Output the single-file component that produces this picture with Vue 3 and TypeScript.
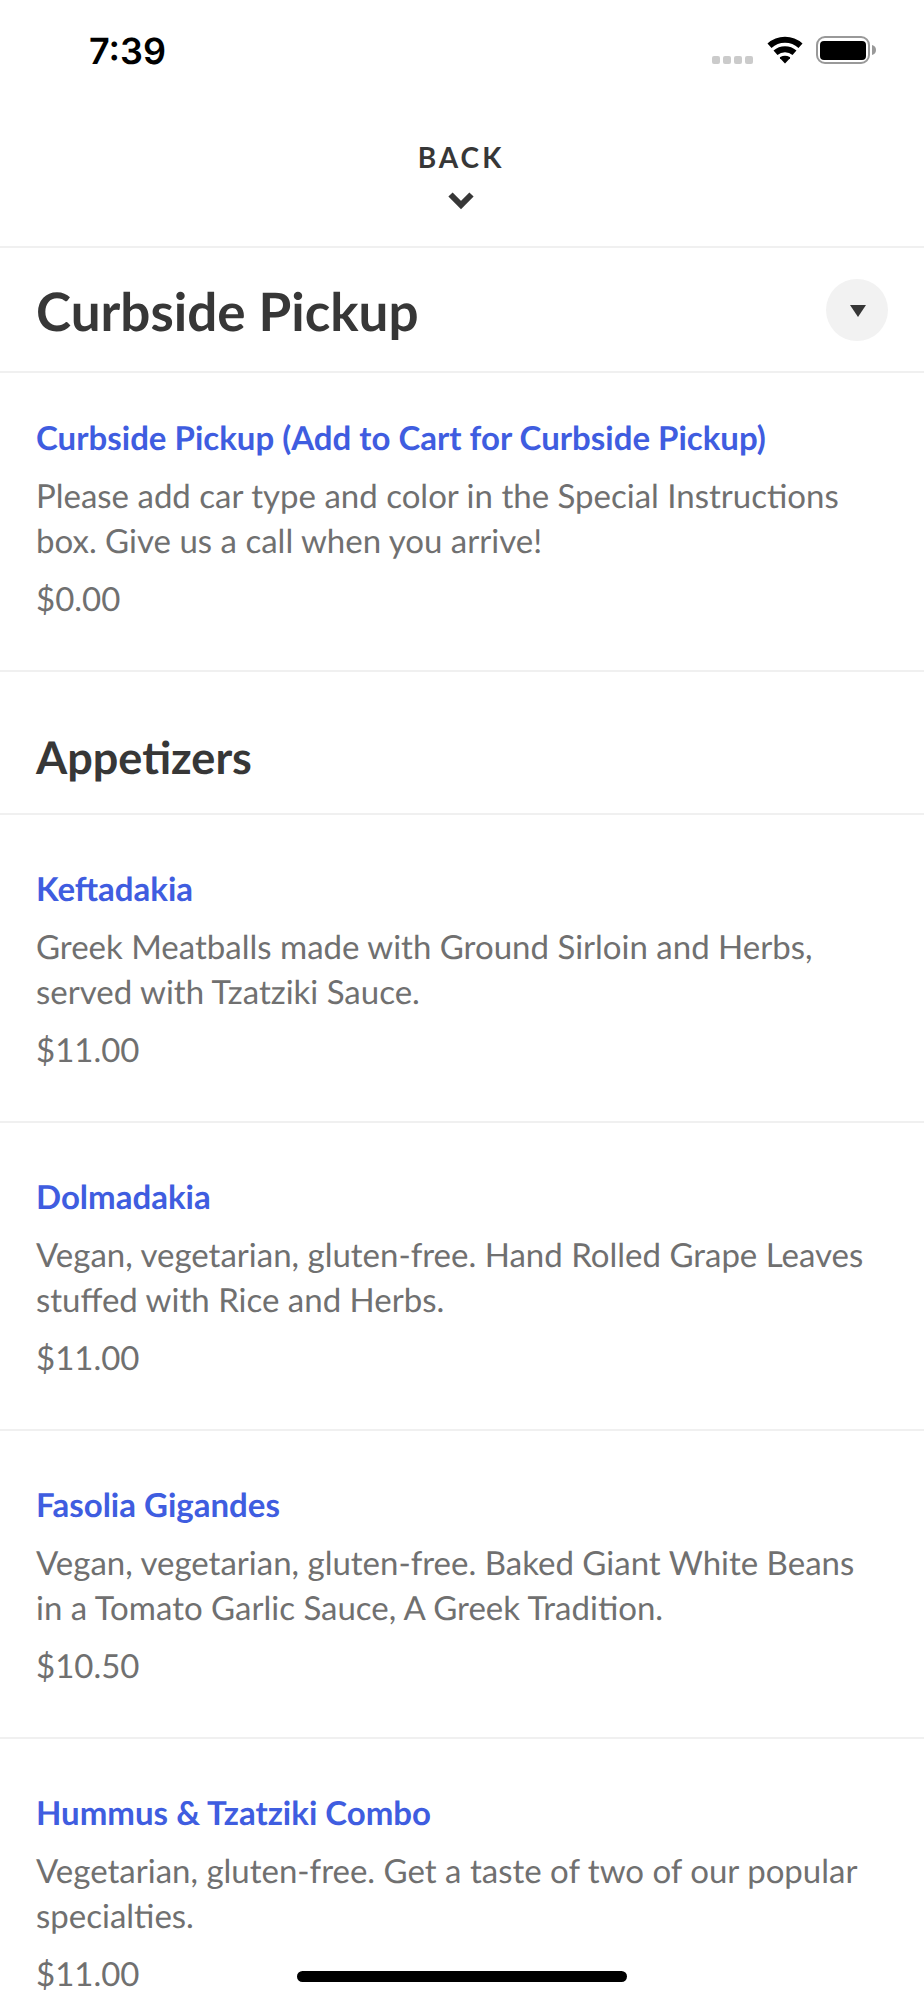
<script setup lang="ts">
interface Dish {
  name: string
  description: string
  price: string
}

const pickup: Dish[] = [
  {
    name: 'Curbside Pickup (Add to Cart for Curbside Pickup)',
    description: 'Please add car type and color in the Special Instructions box. Give us a call when you arrive!',
    price: '$0.00',
  },
]

const appetizers: Dish[] = [
  {
    name: 'Keftadakia',
    description: 'Greek Meatballs made with Ground Sirloin and Herbs, served with Tzatziki Sauce.',
    price: '$11.00',
  },
  {
    name: 'Dolmadakia',
    description: 'Vegan, vegetarian, gluten-free. Hand Rolled Grape Leaves stuffed with Rice and Herbs.',
    price: '$11.00',
  },
  {
    name: 'Fasolia Gigandes',
    description: 'Vegan, vegetarian, gluten-free. Baked Giant White Beans in a Tomato Garlic Sauce, A Greek Tradition.',
    price: '$10.50',
  },
  {
    name: 'Hummus & Tzatziki Combo',
    description: 'Vegetarian, gluten-free. Get a taste of two of our popular specialties.',
    price: '$11.00',
  },
]
</script>

<template>
  <div class="screen">
    <div class="status">
      <span class="time">7:39</span>
      <div class="indicators">
        <svg width="42" height="8" viewBox="0 0 42 8" fill="#cbcbcb">
          <rect x="0" y="0" width="8" height="8" rx="2" />
          <rect x="11" y="0" width="8" height="8" rx="2" />
          <rect x="22" y="0" width="8" height="8" rx="2" />
          <rect x="33" y="0" width="8" height="8" rx="2" />
        </svg>
        <svg width="36" height="28" viewBox="0 0 36 28">
          <g fill="none" stroke="#000" stroke-width="6">
            <path d="M2.500 9.8A23 23 0 0 1 33.500 9.8" />
            <path d="M8.500 16.8A14.5 14.5 0 0 1 27.500 16.8" />
          </g>
          <path d="M18 27.5L13 22.3Q12.600 21.600 13.300 21.100Q18 18.300 22.700 21.100Q23.400 21.600 23 22.300Z" />
        </svg>
        <svg width="60" height="28" viewBox="0 0 60 28">
          <rect x="1" y="1" width="52" height="26" rx="8" fill="none" stroke="#999" stroke-width="2" />
          <rect x="4" y="5" width="46" height="19" rx="4" />
          <path d="M56 9q4 1 4 5t-4 5z" fill="#999" />
        </svg>
      </div>
    </div>

    <header class="top">
      <button class="back" type="button">
        <span>BACK</span>
        <svg width="26" height="18" viewBox="0 0 26 18" fill="none" stroke="#373737" stroke-width="6">
          <path d="M2.500 2.500L13 13L23.500 2.500" />
        </svg>
      </button>
    </header>

    <main>
      <div class="category">
        <h1>Curbside Pickup</h1>
        <button class="toggle" type="button" aria-label="Choose a category">
          <svg width="16" height="12" viewBox="0 0 16 12"><path d="M0 0h16L8 12z" fill="#373737" /></svg>
        </button>
      </div>
      <article v-for="dish in pickup" :key="dish.name" class="dish first">
        <h3><a href="#">{{ dish.name }}</a></h3>
        <p>{{ dish.description }}</p>
        <p class="price">{{ dish.price }}</p>
      </article>
      <h2>Appetizers</h2>
      <article v-for="dish in appetizers" :key="dish.name" class="dish">
        <h3><a href="#">{{ dish.name }}</a></h3>
        <p>{{ dish.description }}</p>
        <p class="price">{{ dish.price }}</p>
      </article>
    </main>
    <div class="home"></div>
  </div>
</template>

<style>
body {
  margin: 0;
  overflow: hidden;
}
</style>

<style scoped>
.screen {
  height: 100vh;
  overflow: hidden;
  background: #fff;
  color: #373737;
  font-family: Lato, sans-serif;
  text-rendering: geometricPrecision;
}
.status {
  display: flex;
  justify-content: space-between;
  align-items: center;
  height: 100px;
  padding: 0 48px 0 89px;
  color: #000;
}
.time {
  padding-top: 2px;
  font: 600 36px/44px Inter, sans-serif;
}
.indicators {
  display: flex;
  align-items: flex-end;
  gap: 13px;
}
.top {
  display: flex;
  justify-content: center;
  height: 146px;
  border-bottom: 2px solid #f0f0f0;
}
button {
  border: 0;
  padding: 0;
  color: inherit;
  font-family: inherit;
  cursor: pointer;
}
.back {
  display: flex;
  flex-direction: column;
  align-items: center;
  gap: 17px;
  padding: 39px 2px 0 0;
  background: none;
  font-size: 28px;
  font-weight: 700;
  line-height: 36px;
  letter-spacing: 3px;
}
.category {
  display: flex;
  align-items: center;
  justify-content: space-between;
  height: 123px;
  padding: 0 36px;
  border-bottom: 2px solid #f0f0f0;
}
h1,
h2,
h3,
p {
  margin: 0;
}
h1 {
  padding-top: 4px;
  font-size: 53px;
  line-height: 64px;
}
.toggle {
  display: grid;
  place-items: center;
  width: 62px;
  height: 62px;
  padding: 2px 0 0 2px;
  border-radius: 50%;
  background: #f2f2f2;
}
h2 {
  padding: 57px 36px 27px;
  border-bottom: 2px solid #f0f0f0;
  font-size: 45px;
  line-height: 57px;
}
.dish {
  padding: 52px 36px 48px;
  border-bottom: 2px solid #f0f0f0;
  color: #707070;
  font-size: 33px;
  line-height: 45px;
}
.dish.first {
  padding-top: 43px;
}
h3 {
  margin-bottom: 13px;
  font-size: 33px;
  line-height: 45px;
}
h3 a {
  color: #3f5de0;
  text-decoration: none;
}
.price {
  margin-top: 13px;
}
.home {
  position: fixed;
  bottom: 18px;
  left: 50%;
  width: 330px;
  height: 11px;
  margin-left: -165px;
  border-radius: 6px;
  background: #000;
}
</style>
